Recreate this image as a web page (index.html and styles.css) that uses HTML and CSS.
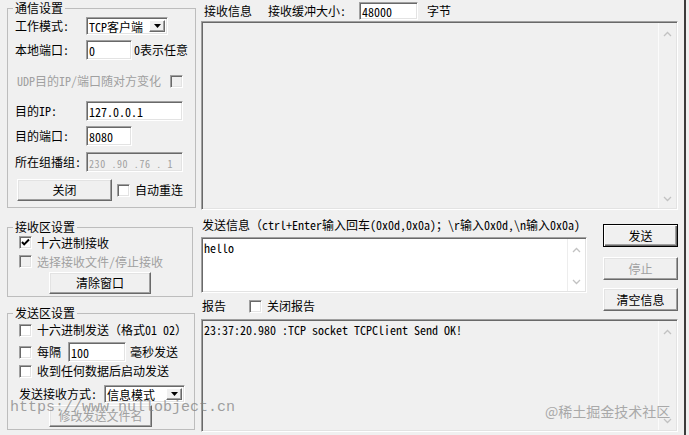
FILE: index.html
```html
<!DOCTYPE html>
<html>
  <head>
    <title>网络调试助手</title>
    <meta charset="utf-8" />
    <link rel="stylesheet" href="styles.css">
  </head>
  <body>
    <div id="app">
      <div class="left">
        <fieldset class="group">
          <legend>通信设置</legend>
          <div class="row h18 mt1">
            <span class="lbl">工作模式:</span>
            <div class="combo sunken w82">
              <span class="combo-text">TCP客户端</span>
              <span class="combo-btn"><svg width="7" height="4" viewBox="0 0 7 4"><path d="M0 0h7L3.5 4z" /></svg></span>
            </div>
          </div>
          <div class="row h20 mt5">
            <span class="lbl">本地端口:</span>
            <div class="edit sunken w46">0</div>
            <span class="ml2">0表示任意</span>
          </div>
          <div class="row h20 mt11">
            <span class="dis ml2">UDP目的IP/端口随对方变化</span>
            <span class="chk dis-box ml9"></span>
          </div>
          <div class="row h20 mt10">
            <span class="lbl">目的IP:</span>
            <div class="edit sunken w97">127.0.0.1</div>
          </div>
          <div class="row h20 mt5">
            <span class="lbl">目的端口:</span>
            <div class="edit sunken w46">8080</div>
          </div>
          <div class="row h20 mt6">
            <span class="lbl">所在组播组:</span>
            <div class="edit sunken off w97"><span class="ip">230 .90 .76 . 1</span></div>
          </div>
          <div class="row h22 mt7">
            <div class="btn w95 ml2">关闭</div>
            <span class="chk ml5"></span>
            <span class="ml5">自动重连</span>
          </div>
        </fieldset>

        <fieldset class="group mt11">
          <legend>接收区设置</legend>
          <div class="row h15">
            <span class="chk ml4"><svg width="11" height="11" viewBox="0 0 11 11"><path d="M2 5l2.2 2.4L9 2.5" fill="none" stroke="#000" stroke-width="2" /></svg></span>
            <span class="ml5">十六进制接收</span>
          </div>
          <div class="row h15 mt4">
            <span class="chk dis-box ml4"></span>
            <span class="dis ml5">选择接收文件/停止接收</span>
          </div>
          <div class="row h22 mt3">
            <div class="btn w102 ml34">清除窗口</div>
          </div>
        </fieldset>

        <fieldset class="group mt8">
          <legend>发送区设置</legend>
          <div class="row h16 mt1">
            <span class="chk ml4"></span>
            <span class="ml5">十六进制发送（格式01 02）</span>
          </div>
          <div class="row h20 mt4">
            <span class="chk ml4"></span>
            <span class="ml5">每隔</span>
            <div class="edit sunken w58 ml7">100</div>
            <span class="ml4">毫秒发送</span>
          </div>
          <div class="row h16 mt1">
            <span class="chk ml4"></span>
            <span class="ml5">收到任何数据后启动发送</span>
          </div>
          <div class="row h20 mt5">
            <span class="ml4">发送接收方式:</span>
            <div class="combo sunken w81 ml7">
              <span class="combo-text">信息模式</span>
              <span class="combo-btn"><svg width="7" height="4" viewBox="0 0 7 4"><path d="M0 0h7L3.5 4z" /></svg></span>
            </div>
          </div>
          <div class="row h22 mt1">
            <div class="btn w103 ml34 dis">修改发送文件名</div>
          </div>
        </fieldset>
      </div>

      <div class="right">
        <div class="recv-head">
          <span class="ml3">接收信息</span>
          <span class="ml16">接收缓冲大小:</span>
          <div class="edit sunken w59 h18 ml13">48000</div>
          <span class="ml9">字节</span>
        </div>
        <div class="box sunken recv-box">
          <div class="box-text"></div>
          <div class="vsb">
            <svg width="9" height="6" viewBox="0 0 9 6"><path d="M1 5L4.5 1.5L8 5" /></svg>
            <svg width="9" height="6" viewBox="0 0 9 6"><path d="M1 1L4.5 4.5L8 1" /></svg>
          </div>
        </div>
        <div class="mid">
          <div class="mid-main">
            <div class="send-label">发送信息（ctrl+Enter输入回车(0x0d,0x0a)；\r输入0x0d,\n输入0x0a)</div>
            <div class="box sunken send-box">
              <div class="box-text">hello</div>
              <div class="vsb white">
                <svg width="9" height="6" viewBox="0 0 9 6"><path d="M1 5L4.5 1.5L8 5" /></svg>
                <svg width="9" height="6" viewBox="0 0 9 6"><path d="M1 1L4.5 4.5L8 1" /></svg>
              </div>
            </div>
            <div class="report-head">
              <span class="ml1">报告</span>
              <span class="chk ml23"></span>
              <span class="ml5">关闭报告</span>
            </div>
          </div>
          <div class="btns">
            <div class="btn default mt14">发送</div>
            <div class="btn dis mt10">停止</div>
            <div class="btn mt8">清空信息</div>
          </div>
        </div>
        <div class="box sunken report-box">
          <div class="box-text">23:37:20.980 :TCP socket TCPClient Send OK!</div>
          <div class="vsb">
            <svg width="9" height="6" viewBox="0 0 9 6"><path d="M1 5L4.5 1.5L8 5" /></svg>
            <svg width="9" height="6" viewBox="0 0 9 6"><path d="M1 1L4.5 4.5L8 1" /></svg>
          </div>
        </div>
      </div>
      <div class="edge"></div>
    </div>

    <div class="mark-url">https://www.nullobject.cn</div>
    <div class="mark-juejin">@稀土掘金技术社区</div>
  </body>
</html>
```

FILE: styles.css
```css
* {
  box-sizing: border-box;
}
html,
body {
  margin: 0;
  padding: 0;
}
body {
  position: relative;
  width: 689px;
  height: 435px;
  overflow: hidden;
  background: #f0f0f0;
  color: #000;
  font: 12px/16px "Noto Sans Mono CJK SC", "Noto Sans CJK SC", monospace;
  white-space: nowrap;
}
#app {
  display: flex;
  height: 435px;
}

/* left column: group boxes */
.left {
  flex: none;
  width: 200px;
  padding-left: 7px;
}
.group {
  width: 186px;
  margin: 0;
  padding: 0 7px 2px;
  border: 1px solid #bdbdbd;
}
.group:first-child {
  padding-bottom: 6px;
}
.group legend {
  height: 16px;
  margin-left: -2px;
  padding: 0 2px;
  line-height: 16px;
}
.row {
  display: flex;
  align-items: center;
}
.lbl {
  width: 71px;
}
.dis {
  color: #a0a0a0;
}

/* sizes and gaps */
.h15 { height: 15px; }
.h16 { height: 16px; }
.h18 { height: 18px; }
.h20 { height: 20px; }
.h22 { height: 22px; }
.w46 { width: 46px; }
.w58 { width: 58px; }
.w59 { width: 59px; }
.w81 { width: 81px; }
.w82 { width: 82px; }
.w95 { width: 95px; }
.w97 { width: 97px; }
.w102 { width: 102px; }
.w103 { width: 103px; }
.mt1 { margin-top: 1px; }
.mt3 { margin-top: 3px; }
.mt4 { margin-top: 4px; }
.mt5 { margin-top: 5px; }
.mt6 { margin-top: 6px; }
.mt7 { margin-top: 7px; }
.mt8 { margin-top: 8px; }
.mt10 { margin-top: 10px; }
.mt11 { margin-top: 11px; }
.mt14 { margin-top: 14px; }
.ml1 { margin-left: 1px; }
.ml2 { margin-left: 2px; }
.ml3 { margin-left: 3px; }
.ml4 { margin-left: 4px; }
.ml5 { margin-left: 5px; }
.ml7 { margin-left: 7px; }
.ml9 { margin-left: 9px; }
.ml13 { margin-left: 13px; }
.ml16 { margin-left: 16px; }
.ml23 { margin-left: 23px; }
.ml34 { margin-left: 34px; }

/* classic controls */
.sunken {
  border: 1px solid;
  border-color: #a0a0a0 #fff #fff #a0a0a0;
  box-shadow: inset 1px 1px 0 #696969, inset -1px -1px 0 #e3e3e3;
}
.edit {
  height: 20px;
  padding: 1px 0 0 2px;
  background: #fff;
  line-height: 17px;
}
.edit.h18 {
  height: 18px;
  line-height: 15px;
}
.edit.off {
  background: #f0f0f0;
  color: #a0a0a0;
}
.ip {
  font-size: 10px;
  letter-spacing: 0.6px;
  white-space: pre;
}
.combo {
  display: flex;
  height: 18px;
  padding: 2px;
  background: #fff;
}
.combo-text {
  flex: 1;
  line-height: 14px;
}
.combo-btn {
  display: flex;
  align-items: center;
  justify-content: center;
  width: 16px;
  background: #f0f0f0;
  border: 1px solid;
  border-color: #fff #696969 #696969 #fff;
  box-shadow: inset -1px -1px 0 #a0a0a0;
}
.btn {
  display: flex;
  align-items: center;
  justify-content: center;
  height: 22px;
  background: #f0f0f0;
  border: 1px solid;
  border-color: #fff #696969 #696969 #fff;
  box-shadow: inset -1px -1px 0 #a0a0a0, inset 1px 1px 0 #e3e3e3;
}
.btn.default {
  border-color: #000;
  box-shadow: inset 1px 1px 0 #fff, inset -1px -1px 0 #696969, inset -2px -2px 0 #a0a0a0;
}
.chk {
  display: flex;
  align-items: center;
  justify-content: center;
  flex: none;
  width: 13px;
  height: 13px;
  background: #fff;
  border: 1px solid;
  border-color: #a0a0a0 #fff #fff #a0a0a0;
  box-shadow: inset 1px 1px 0 #696969, inset -1px -1px 0 #e3e3e3;
}
.chk.dis-box {
  background: #f0f0f0;
}

/* right column */
.right {
  flex: none;
  width: 484px;
  padding-left: 1px;
}
.recv-head {
  display: flex;
  align-items: center;
  height: 21px;
}
.box {
  display: flex;
  width: 477px;
}
.box-text {
  flex: 1;
  padding: 2px 0 0 2px;
}
.vsb {
  display: flex;
  flex-direction: column;
  align-items: center;
  justify-content: space-between;
  width: 18px;
  margin: 1px 1px 1px 0;
  padding: 8px 0 6px;
  border-left: 1px solid #fbfbfb;
}
.vsb path {
  fill: none;
  stroke: #c2c2c2;
  stroke-width: 1.3;
}
.vsb.white {
  background: #fff;
  border-left-color: #ededed;
}
.recv-box {
  height: 189px;
}
.mid {
  display: flex;
  height: 109px;
}
.mid-main {
  width: 387px;
}
.send-label {
  height: 27px;
  padding: 7px 0 0 1px;
}
.send-box {
  width: 386px;
  height: 56px;
  background: #fff;
}
.report-head {
  display: flex;
  align-items: center;
  height: 26px;
}
.btns {
  width: 75px;
  margin-left: 15px;
}
.btns .btn {
  height: 23px;
}
.report-box {
  height: 113px;
}
.edge {
  flex: none;
  width: 2px;
  background: #3c3c3c;
}

/* watermarks over the window */
.mark-url {
  position: absolute;
  left: 10px;
  top: 398px;
  color: rgba(130, 130, 130, 0.75);
  font: 15px/20px "Liberation Mono", monospace;
}
.mark-juejin {
  position: absolute;
  left: 545px;
  top: 402px;
  color: #a9a9a9;
  font: 14px/18px "Noto Sans CJK SC", sans-serif;
}
```
